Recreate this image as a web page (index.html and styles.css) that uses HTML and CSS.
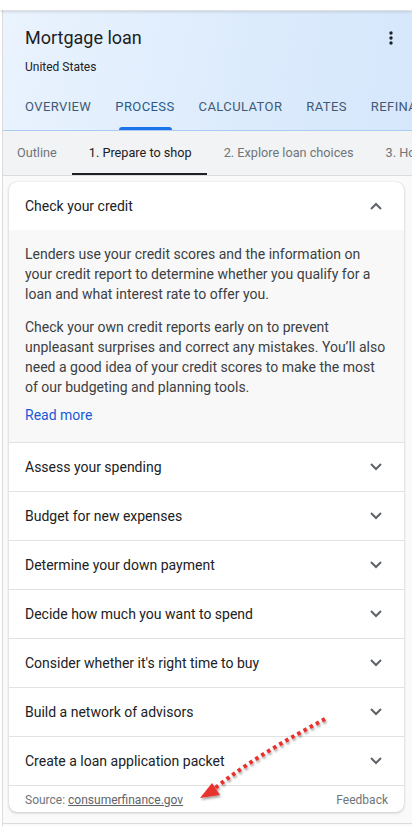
FILE: index.html
```html
<!DOCTYPE html>
<html>
<head>
<meta charset="utf-8">
<link rel="stylesheet" href="styles.css">
</head>
<body>
<div class="frame">
  <div class="topstrip"></div>
  <header class="hero">
    <div class="hero-top">
      <div>
        <div class="title">Mortgage loan</div>
        <div class="subtitle">United States</div>
      </div>
      <svg class="kebab" width="4" height="14" viewBox="0 0 4 14"><circle cx="2" cy="2" r="1.7"/><circle cx="2" cy="7" r="1.7"/><circle cx="2" cy="12" r="1.7"/></svg>
    </div>
    <nav class="tabs">
      <span class="tab">OVERVIEW</span>
      <span class="tab active">PROCESS</span>
      <span class="tab">CALCULATOR</span>
      <span class="tab">RATES</span>
      <span class="tab">REFINANCE</span>
    </nav>
  </header>
  <nav class="subtabs">
    <span class="subtab">Outline</span>
    <span class="subtab active">1. Prepare to shop</span>
    <span class="subtab">2. Explore loan choices</span>
    <span class="subtab">3. Home closing</span>
  </nav>
  <main class="area">
    <section class="card">
      <div class="row open">
        <span>Check your credit</span>
        <svg class="chev" width="12" height="8" viewBox="0 0 12 8"><path d="M1 7 L6 2 L11 7" /></svg>
      </div>
      <div class="expanded">
        <p>Lenders use your credit scores and the information on your credit report to determine whether you qualify for a loan and what interest rate to offer you.</p>
        <p>Check your own credit reports early on to prevent unpleasant surprises and correct any mistakes. You’ll also need a good idea of your credit scores to make the most of our budgeting and planning tools.</p>
        <a class="more">Read more</a>
      </div>
      <div class="row"><span>Assess your spending</span><svg class="chev" width="12" height="8" viewBox="0 0 12 8"><path d="M1 1 L6 6 L11 1" /></svg></div>
      <div class="row"><span>Budget for new expenses</span><svg class="chev" width="12" height="8" viewBox="0 0 12 8"><path d="M1 1 L6 6 L11 1" /></svg></div>
      <div class="row"><span>Determine your down payment</span><svg class="chev" width="12" height="8" viewBox="0 0 12 8"><path d="M1 1 L6 6 L11 1" /></svg></div>
      <div class="row"><span>Decide how much you want to spend</span><svg class="chev" width="12" height="8" viewBox="0 0 12 8"><path d="M1 1 L6 6 L11 1" /></svg></div>
      <div class="row"><span>Consider whether it's right time to buy</span><svg class="chev" width="12" height="8" viewBox="0 0 12 8"><path d="M1 1 L6 6 L11 1" /></svg></div>
      <div class="row"><span>Build a network of advisors</span><svg class="chev" width="12" height="8" viewBox="0 0 12 8"><path d="M1 1 L6 6 L11 1" /></svg></div>
      <div class="row"><span>Create a loan application packet</span><svg class="chev" width="12" height="8" viewBox="0 0 12 8"><path d="M1 1 L6 6 L11 1" /></svg></div>
      <div class="foot">
        <span>Source: <u>consumerfinance.gov</u></span>
        <span>Feedback</span>
      </div>
    </section>
  </main>
  <svg class="arrow" width="412" height="826" viewBox="0 0 412 826">
    <defs>
      <filter id="sh" x="-20%" y="-20%" width="140%" height="140%">
        <feDropShadow dx="1" dy="2" stdDeviation="1.2" flood-color="#000" flood-opacity="0.35"/>
      </filter>
    </defs>
    <g filter="url(#sh)">
      <path d="M325 719 C 290 738, 250 760, 214 789" fill="none" stroke="#e8322e" stroke-width="4" stroke-dasharray="3.5 3.5"/>
      <polygon points="200,798 212,783 220,795" fill="#e8322e"/>
    </g>
  </svg>
</div>
</body>
</html>
```
FILE: styles.css
```css
* { box-sizing: border-box; }
html, body { margin: 0; padding: 0; }
body {
  width: 412px;
  height: 826px;
  overflow: hidden;
  font-family: Roboto, "Noto Sans", Arial, sans-serif;
  background: #fff;
}
.frame {
  position: relative;
  height: 826px;
  margin-left: 2px;
  border-left: 1px solid #dcdcdc;
  background: #fafafa;
}
.topstrip {
  height: 10px;
  margin-left: -3px;
  background: #fff;
  box-shadow: 0 2px 3px rgba(0,0,0,0.12);
  position: relative;
  z-index: 1;
}
.hero {
  margin-top: 1px;
  background: linear-gradient(100deg, #eaf3fe 0%, #dcebfc 60%, #d6e7fc 100%);
  border-bottom: 1px solid #a9cbf5;
}
.hero-top {
  display: flex;
  justify-content: space-between;
  padding: 15px 19px 0 22px;
}
.title {
  font-size: 18px;
  color: #202124;
  line-height: 24px;
}
.subtitle {
  font-size: 12px;
  color: #202124;
  margin-top: 9px;
  line-height: 16px;
}
.kebab { fill: #202124; margin-top: 5px; }
.tabs {
  display: flex;
  gap: 24px;
  padding: 24px 0 0 22px;
  white-space: nowrap;
  overflow: hidden;
}
.tab {
  font-size: 13px;
  letter-spacing: 0.4px;
  color: #3f5a74;
  line-height: 16px;
  padding-bottom: 15px;
  position: relative;
}
.tab.active { color: #2a5a8c; }
.tab.active::after {
  content: "";
  position: absolute;
  left: 4px;
  right: 3px;
  bottom: 0;
  height: 3px;
  background: #1a73e8;
  border-radius: 3px 3px 0 0;
}
.subtabs {
  display: flex;
  height: 45px;
  background: #f1f3f4;
  border-bottom: 1px solid #dadce0;
  white-space: nowrap;
  overflow: hidden;
}
.subtab {
  font-size: 12.7px;
  color: #70757a;
  padding: 0 15px 0 14px;
  line-height: 44px;
  position: relative;
}
.subtab:not(:first-child) { padding: 0 15px 0 17px; }
.subtab.active { color: #202124; }
.subtab.active::after {
  content: "";
  position: absolute;
  left: 0;
  right: 0;
  bottom: -1px;
  height: 3px;
  background: #202124;
}
.area {
  padding: 6px 8px 0 6px;
}
.card {
  background: #fff;
  border-radius: 8px;
  box-shadow: 0 1px 3px rgba(0,0,0,0.2), 0 0 1px rgba(0,0,0,0.15);
  overflow: hidden;
}
.row {
  display: flex;
  justify-content: space-between;
  align-items: center;
  height: 49px;
  padding: 0 22px 0 16px;
  border-top: 1px solid #e2e2e2;
  font-size: 14px;
  color: #202124;
}
.row.open { border-top: none; height: 48px; }
.chev { fill: none; stroke: #5f6368; stroke-width: 2; }
.expanded {
  background: #f8f8f8;
  padding: 14px 16px 17px 16px;
  font-size: 14px;
  line-height: 20px;
  color: #3c4043;
}
.expanded p { margin: 0 0 13px 0; }
.expanded p + p { margin-bottom: 8px; }
.more { color: #1a5ad6; display: block; }
.foot {
  display: flex;
  justify-content: space-between;
  border-top: 1px solid #e2e2e2;
  height: 27px;
  padding: 1px 16px 0;
  align-items: center;
  font-size: 12px;
  color: #70757a;
}
.foot u { color: #5f6368; }
.arrow {
  position: absolute;
  left: -3px;
  top: 0;
  pointer-events: none;
}
.frame::after {
  content: "";
  position: absolute;
  left: 0;
  right: 0;
  top: 823px;
  height: 1px;
  background: #dcdcdc;
}
```
